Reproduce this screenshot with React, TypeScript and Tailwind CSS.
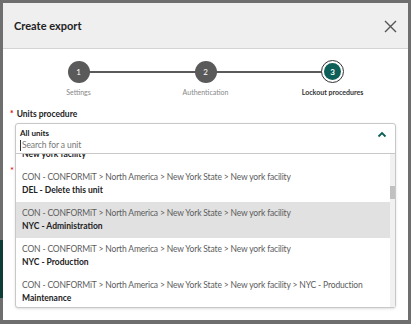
import React from 'react';

const font = { fontFamily: 'Lato, "Open Sans", sans-serif' };

const steps = [
  { n: 1, label: 'Settings', done: true },
  { n: 2, label: 'Authentication', done: true },
  { n: 3, label: 'Lockout procedures', done: false },
];

const base = 'CON - CONFORMiT > North America > New York State > New york facility';

const units = [
  { path: base.replace(' > New york facility', ''), name: 'New york facility' },
  { path: base, name: 'DEL - Delete this unit' },
  { path: base, name: 'NYC - Administration', active: true },
  { path: base, name: 'NYC - Production' },
  { path: base + ' > NYC - Production', name: 'Maintenance' },
];

function Stepper() {
  return (
    <div className="grid grid-cols-3 pt-[11px]">
      {steps.map((s, i) => (
        <div key={s.n} className="flex flex-col items-center">
          <div className="relative flex w-full items-center justify-center h-[23px]">
            {i > 0 && <div className="absolute left-0 right-1/2 top-[11px] h-[2px] bg-[#5a5a5a]" />}
            {i < steps.length - 1 && <div className="absolute left-1/2 right-0 top-[11px] h-[2px] bg-[#5a5a5a]" />}
            {s.done ? (
              <div className="relative flex h-[22px] w-[22px] items-center justify-center rounded-full bg-[#5a5a5a] text-[8px] text-white">
                {s.n}
              </div>
            ) : (
              <div className="relative flex h-[23px] w-[23px] items-center justify-center rounded-full border border-[#333] bg-white">
                <div className="flex h-[17px] w-[17px] items-center justify-center rounded-full bg-[#0d5f57] text-[8px] font-bold text-white">
                  {s.n}
                </div>
              </div>
            )}
          </div>
          <div className={`mt-[4px] text-[7px] leading-[10px] ${s.done ? 'text-[#888]' : 'font-bold text-[#333]'}`}>
            {s.label}
          </div>
        </div>
      ))}
    </div>
  );
}

function UnitDropdown() {
  return (
    <div className="absolute left-0 right-0 top-0 z-10 rounded-[3px] border border-[#c8c8c8] bg-white shadow-sm">
      <div className="flex items-start justify-between border-b border-[#c8c8c8] px-[4px] pt-[3px] pb-[1px]">
        <div className="flex flex-col">
          <span className="text-[8px] leading-[12px] font-bold text-[#222]">All units</span>
          <span className="flex items-center text-[8.5px] leading-[13px] tracking-[-0.1px] text-[#777]">
            <span className="mr-[1px] h-[11px] w-px bg-[#333]" />
            Search for a unit
          </span>
        </div>
        <svg className="mt-[4px] mr-[4px]" width="10" height="7" viewBox="0 0 10 7">
          <path d="M1.5 5.5 L5 2 L8.5 5.5" stroke="#0d5f57" strokeWidth="1.8" fill="none" />
        </svg>
      </div>
      <div className="flex h-[153px]">
        <div className="flex-1 overflow-hidden">
          <div className="-mt-[24px]">
            {units.map((u, i) => (
              <div
                key={i}
                className={`flex h-[36px] flex-col justify-center px-[6px] ${u.active ? 'bg-[#e1e1e1]' : ''}`}
              >
                <span className="text-[8.5px] leading-[13px] tracking-[-0.15px] whitespace-nowrap text-[#5c5c5c]">{u.path}</span>
                <span className="text-[8.5px] leading-[13px] font-bold text-[#222]">{u.name}</span>
              </div>
            ))}
          </div>
        </div>
        <div className="flex w-[5px] flex-col bg-[#f1f1f1]">
          <div className="h-[32px]" />
          <div className="h-[13px] bg-[#c1c1c1]" />
        </div>
      </div>
    </div>
  );
}

export default function App() {
  return (
    <div className="relative h-[324px] w-[411px] overflow-hidden bg-[#6e6e6e] p-[3px]" style={font}>
      <div className="absolute left-0 top-[240px] h-[58px] w-[3px] bg-[#0f3d36]" />
      <div className="relative flex h-[317px] w-[405px] flex-col bg-white">
        <div className="flex h-[46px] items-center justify-between border-b border-[#d4d4d4] bg-[#efefef] pl-[11px] pr-[11px] pt-[2px]">
          <h1 className="text-[11px] font-bold text-[#222]">Create export</h1>
          <svg width="13" height="13" viewBox="0 0 13 13">
            <path d="M1 1 L12 12 M12 1 L1 12" stroke="#555" strokeWidth="1.4" />
          </svg>
        </div>
        <div className="flex flex-1 flex-col px-[12px]">
          <Stepper />
          <label className="mt-[11px] flex items-center text-[8.5px] leading-[13px] font-bold text-[#222]">
            <span className="-ml-[5px] mr-[3px] text-[#d00]">*</span>
            Units procedure
          </label>
          <div className="relative mt-[2px] h-[33px]">
            <UnitDropdown />
          </div>
          <label className="mt-[8px] -ml-[5px] text-[9.5px] leading-[13px] text-[#d00]">*</label>
          <div className="mt-auto mb-[12px] flex justify-end gap-[7px] pr-[55px]">
            <div className="h-[22px] w-[53px] rounded-[2px] bg-[#b7c7c4]" />
            <div className="h-[22px] w-[34px] rounded-[2px] bg-[#3a6fd0]" />
          </div>
        </div>
      </div>
    </div>
  );
}
